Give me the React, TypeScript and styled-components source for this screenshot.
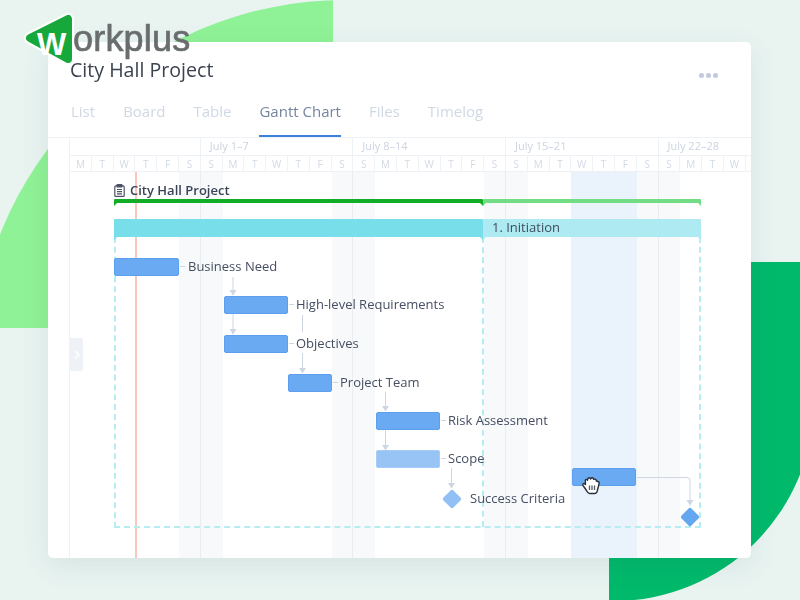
import { Fragment } from "react";
import styled, { createGlobalStyle } from "styled-components";

const ORIGIN_X = 70;
const ORIGIN_Y = 172;
const DAY = 21.8;

const TABS = ["List", "Board", "Table", "Gantt Chart", "Files", "Timelog"];
const WEEKS = [
  { label: "", days: 6 },
  { label: "July 1–7", days: 7 },
  { label: "July 8–14", days: 7 },
  { label: "July 15–21", days: 7 },
  { label: "July 22–28", days: 5 },
];
const LETTERS = ("MTWTFS" + "SMTWTFS".repeat(3) + "SMTW").split("");

const TASKS = [
  { name: "Business Need", x: 114, y: 258, w: 65, labelX: 188 },
  { name: "High-level Requirements", x: 224, y: 296, w: 64, labelX: 296 },
  { name: "Objectives", x: 224, y: 335, w: 64, labelX: 296 },
  { name: "Project Team", x: 288, y: 374, w: 44, labelX: 340 },
  { name: "Risk Assessment", x: 376, y: 412, w: 64, labelX: 448 },
  { name: "Scope", x: 376, y: 450, w: 64, labelX: 448, faded: true },
];

const GlobalStyle = createGlobalStyle`
  html, body {
    margin: 0;
    padding: 0;
  }
  body {
    font-family: "Open Sans", "Noto Sans", sans-serif;
  }
`;

const Page = styled.div`
  position: relative;
  width: 800px;
  height: 600px;
  box-sizing: border-box;
  padding: 42px 49px 42px 48px;
  overflow: hidden;
  background: #e9f4f1;
`;

const LightBlob = styled.div`
  position: absolute;
  left: 0;
  top: 0;
  width: 333px;
  height: 328px;
  background: #8ff296;
  clip-path: circle(371px at 345px 371px);
`;

const DarkBlob = styled.div`
  position: absolute;
  left: 609px;
  top: 262px;
  width: 205px;
  height: 339px;
  background: #00b96b;
  border-bottom-right-radius: 200px;
`;

const Card = styled.main`
  position: relative;
  display: flex;
  flex-direction: column;
  height: 100%;
  background: #fff;
  border-radius: 5px;
  overflow: hidden;
  box-shadow: 0 8px 28px rgba(50, 90, 90, 0.1);
  filter: blur(0.45px);
`;

const Header = styled.header`
  display: flex;
  justify-content: space-between;
  padding: 14px 33px 0 22px;
`;

const Title = styled.h1`
  margin: 0;
  font-size: 19.6px;
  line-height: 27px;
  font-weight: 400;
  color: #3c4350;
`;

const Dots = styled.div`
  display: flex;
  gap: 2px;
  margin-top: 17px;
`;

const Dot = styled.span`
  width: 5px;
  height: 5px;
  border-radius: 50%;
  background: #c2cadb;
`;

const Tabs = styled.nav`
  display: flex;
  gap: 28px;
  margin-top: 17px;
  padding-left: 23px;
`;

const Tab = styled.a<{ $active?: boolean }>`
  padding-bottom: 13px;
  font-size: 15px;
  line-height: 22px;
  color: ${(p) => (p.$active ? "#75859f" : "#d0d8e4")};
  border-bottom: 2px solid ${(p) => (p.$active ? "#3f80d8" : "transparent")};
`;

const Timeline = styled.section`
  flex: 1;
  display: flex;
  min-height: 0;
  border-top: 1px solid #eef1f5;
`;

const Rail = styled.div`
  width: 22px;
  flex-shrink: 0;
  border-right: 1px solid #eef1f5;
  box-sizing: border-box;
`;

const Schedule = styled.div`
  flex: 1;
  display: flex;
  flex-direction: column;
  min-width: 0;
  overflow: hidden;
`;

const WeekRow = styled.div`
  display: grid;
  grid-template-columns: repeat(32, ${DAY}px);
  height: 17px;
  flex-shrink: 0;
  border-bottom: 1px solid #eef1f5;
`;

const Week = styled.div<{ $days: number }>`
  grid-column: span ${(p) => p.$days};
  padding-left: 9px;
  font-size: 11px;
  line-height: 16px;
  color: #ccd4e0;
  border-right: 1px solid #eef1f5;
  box-sizing: border-box;
`;

const DayRow = styled.div`
  display: grid;
  grid-template-columns: repeat(32, ${DAY}px);
  height: 15px;
  flex-shrink: 0;
  border-bottom: 1px solid #eef1f5;
`;

const DayCell = styled.div`
  font-size: 10px;
  line-height: 16px;
  text-align: center;
  color: #d3dae4;
  border-right: 1px solid #f0f3f6;
  box-sizing: border-box;
`;

const Chart = styled.div`
  position: relative;
  flex: 1;
  display: grid;
  grid-template-columns: repeat(32, ${DAY}px);
`;

const Lane = styled.div<{ $tone: "plain" | "weekend" | "focus"; $weekEnd: boolean }>`
  box-sizing: border-box;
  background: ${(p) =>
    p.$tone === "focus" ? "#eaf2fc" : p.$tone === "weekend" ? "#f7f9fb" : "transparent"};
  border-right: ${(p) => (p.$weekEnd ? "1px solid #e9edf2" : "0")};
`;

const TodayLine = styled.div`
  position: absolute;
  left: ${135 - ORIGIN_X}px;
  top: 0;
  bottom: 0;
  width: 2px;
  background: #fbc6bb;
`;

const PhaseOutline = styled.div`
  position: absolute;
  left: ${114 - ORIGIN_X}px;
  top: ${237 - ORIGIN_Y}px;
  width: 587px;
  height: 291px;
  box-sizing: border-box;
  border: 2px dashed #b6edf3;
  border-top: 0;
`;

const PhaseDivider = styled.div`
  position: absolute;
  left: ${482 - ORIGIN_X}px;
  top: ${237 - ORIGIN_Y}px;
  height: 290px;
  border-left: 2px dashed #b6edf3;
`;

const Wires = styled.svg`
  position: absolute;
  inset: 0;
  width: 100%;
  height: 100%;
`;

const ProjectName = styled.div`
  position: absolute;
  left: ${114 - ORIGIN_X}px;
  top: ${181 - ORIGIN_Y}px;
  display: flex;
  align-items: center;
  gap: 5px;
  font-size: 13px;
  line-height: 18px;
  font-weight: 600;
  color: #3b4357;
`;

const SpanBar = styled.div<{ $top: number; $height: number }>`
  position: absolute;
  left: ${114 - ORIGIN_X}px;
  top: ${(p) => p.$top - ORIGIN_Y}px;
  width: 587px;
  height: ${(p) => p.$height}px;
  display: flex;
`;

const SpanPart = styled.div<{ $width: number; $color: string }>`
  position: relative;
  width: ${(p) => p.$width}px;
  box-sizing: border-box;
  padding-left: 9px;
  background: ${(p) => p.$color};
  border-radius: 1px 1px 0 0;
  color: #3e4c5c;
  font-size: 13px;
  line-height: 17px;
  &::before,
  &::after {
    content: "";
    position: absolute;
    top: 100%;
    width: 3px;
    height: 3px;
    background: ${(p) => p.$color};
  }
  &::before {
    left: 0;
    clip-path: polygon(0 0, 100% 0, 0 100%);
  }
  &::after {
    right: 0;
    clip-path: polygon(0 0, 100% 0, 100% 100%);
  }
`;

const TaskBar = styled.div<{ $x: number; $y: number; $w: number; $faded?: boolean }>`
  position: absolute;
  left: ${(p) => p.$x - ORIGIN_X}px;
  top: ${(p) => p.$y - ORIGIN_Y}px;
  width: ${(p) => p.$w}px;
  height: 18px;
  box-sizing: border-box;
  border-radius: 2px;
  background: ${(p) => (p.$faded ? "#97c3f5" : "#6aaaf2")};
  border: 1px solid ${(p) => (p.$faded ? "#a5cbf6" : "#5c9fee")};
`;

const TaskLabel = styled.span<{ $x: number; $y: number }>`
  position: absolute;
  left: ${(p) => p.$x - ORIGIN_X}px;
  top: ${(p) => p.$y - ORIGIN_Y - 9}px;
  font-size: 13px;
  line-height: 18px;
  white-space: nowrap;
  color: #464e62;
`;

const Milestone = styled.div<{ $x: number; $y: number; $color: string }>`
  position: absolute;
  left: ${(p) => p.$x - ORIGIN_X - 7}px;
  top: ${(p) => p.$y - ORIGIN_Y - 7}px;
  width: 14px;
  height: 14px;
  border-radius: 2px;
  background: ${(p) => p.$color};
  transform: rotate(45deg);
`;

const Cursor = styled.svg`
  position: absolute;
  left: ${581 - ORIGIN_X}px;
  top: ${476 - ORIGIN_Y}px;
  width: 20px;
  height: 19px;
`;

const SideToggle = styled.button`
  position: absolute;
  left: 22px;
  top: 296px;
  width: 13px;
  height: 33px;
  padding: 0;
  display: flex;
  align-items: center;
  justify-content: center;
  border: 0;
  border-radius: 0 2px 2px 0;
  background: #eef1f6;
`;

const Logo = styled.div`
  position: absolute;
  left: 22px;
  top: 10px;
  display: flex;
  align-items: flex-start;
`;

const LogoMark = styled.svg`
  width: 54px;
  height: 58px;
  flex-shrink: 0;
`;

const LogoWord = styled.span`
  margin: 8px 0 0 -3px;
  font-family: "Liberation Sans", Arial, sans-serif;
  font-size: 36px;
  line-height: 42px;
  letter-spacing: 0.2px;
  color: #6a6d6e;
  -webkit-text-stroke: 0.7px #6a6d6e;
  filter: blur(0.4px);
`;

const App = () => {
  return (
    <Page>
      <GlobalStyle />
      <LightBlob />
      <DarkBlob />
      <Card>
        <Header>
          <Title>City Hall Project</Title>
          <Dots>
            <Dot />
            <Dot />
            <Dot />
          </Dots>
        </Header>
        <Tabs>
          {TABS.map((t) => (
            <Tab key={t} $active={t === "Gantt Chart"}>
              {t}
            </Tab>
          ))}
        </Tabs>
        <Timeline>
          <Rail />
          <Schedule>
            <WeekRow>
              {WEEKS.map((w, i) => (
                <Week key={i} $days={w.days}>
                  {w.label}
                </Week>
              ))}
            </WeekRow>
            <DayRow>
              {LETTERS.map((d, i) => (
                <DayCell key={i}>{d}</DayCell>
              ))}
            </DayRow>
            <Chart>
              {LETTERS.map((_, i) => (
                <Lane
                  key={i}
                  $tone={i >= 23 && i <= 25 ? "focus" : i % 7 === 5 || i % 7 === 6 ? "weekend" : "plain"}
                  $weekEnd={i % 7 === 5}
                />
              ))}
              <TodayLine />
              <PhaseOutline />
              <PhaseDivider />

              <Wires viewBox={`${ORIGIN_X} ${ORIGIN_Y} 681 386`}>
                <g fill="none" stroke="#cdd6e2" strokeWidth="1">
                  <path d="M180 266.5H185M289 304.5H294M289 343.5H294M333 382.5H338M441 420.5H446M441 458.500H446" />
                  <path d="M233 277V295" />
                  <path d="M233 314V334" />
                  <path d="M302.500 315V332" />
                  <path d="M302.500 353V373" />
                  <path d="M385.500 392V411" />
                  <path d="M385.500 430V450" />
                  <path d="M451.500 468V488" />
                  <path d="M637 477.500H687a3 3 0 0 1 3 3V505" />
                </g>
                <g fill="#cdd6e2">
                  <path d="M229.500 290H236.500L233 295.500Z" />
                  <path d="M229.500 329H236.500L233 334.500Z" />
                  <path d="M299 368H306L302.500 373.500Z" />
                  <path d="M382 406H389L385.500 411.500Z" />
                  <path d="M382 445H389L385.500 450.500Z" />
                  <path d="M448 483H455L451.500 488.500Z" />
                  <path d="M686.500 500H693.500L690 505.500Z" />
                </g>
              </Wires>

              <ProjectName>
                <svg width="11" height="13" viewBox="0 0 11 13" fill="none" stroke="#4b5264" strokeWidth="1.2">
                  <rect x="0.8" y="1.8" width="9.4" height="10.6" rx="1" />
                  <rect x="3" y="0.6" width="5" height="2.4" rx="0.6" fill="#4b5264" />
                  <path d="M3 5.500H8M3 7.700H8M3 9.900H8" />
                </svg>
                City Hall Project
              </ProjectName>
              <SpanBar $top={199} $height={4}>
                <SpanPart $width={369} $color="#12ad26" />
                <SpanPart $width={218} $color="#72dd84" />
              </SpanBar>
              <SpanBar $top={219} $height={18}>
                <SpanPart $width={369} $color="#77deea" />
                <SpanPart $width={218} $color="#aeeaf2">
                  1. Initiation
                </SpanPart>
              </SpanBar>

              {TASKS.map((t) => (
                <Fragment key={t.name}>
                  <TaskBar $x={t.x} $y={t.y} $w={t.w} $faded={t.faded} />
                  <TaskLabel $x={t.labelX} $y={t.y + 8}>
                    {t.name}
                  </TaskLabel>
                </Fragment>
              ))}
              <Milestone $x={451.5} $y={499} $color="#92c0f5" />
              <TaskLabel $x={470} $y={498}>
                Success Criteria
              </TaskLabel>
              <TaskBar $x={572} $y={468} $w={64} />
              <Milestone $x={690} $y={517} $color="#63a7f1" />
              <Cursor viewBox="0 0 20 19">
                <path
                  d="M4.500 13 L2 9.500 C1 8 2.800 6.800 4 8 L4.500 8.500 L4.300 4.500 C4.300 3 6.300 3 6.500 4.300 L6.800 3 C7 1.300 9.200 1.300 9.500 3 L10 2.500 C10.600 1.200 12.500 1.600 12.500 3.200 L13.300 3.200 C14.500 2.800 15.500 3.800 15.300 5 L17 5.500 C18.200 5.800 18.300 7 18 8 L16.500 14 C16.200 16 15.500 17.500 14 17.500 L8.500 17.500 C6.800 17.500 5.800 15 4.500 13 Z"
                  fill="#fff"
                  stroke="#2a2f38"
                  strokeWidth="1.4"
                  strokeLinejoin="round"
                />
                <path d="M8.500 9.500V14M11 9.500V14M13.500 9.500V14" stroke="#555b66" strokeWidth="1.3" fill="none" />
              </Cursor>
            </Chart>
          </Schedule>
        </Timeline>
        <SideToggle aria-label="Expand">
          <svg width="6" height="10" viewBox="0 0 6 10" fill="none" stroke="#fff" strokeWidth="1.4">
            <path d="M1 1L5 5L1 9" />
          </svg>
        </SideToggle>
      </Card>
      <Logo>
        <LogoMark viewBox="22 10 54 58">
          <polygon points="30,38 68,19 68,59" fill="#fff" stroke="#fff" strokeWidth="12" strokeLinejoin="round" />
          <polygon points="30,38 68,19 68,59" fill="#17a83c" stroke="#17a83c" strokeWidth="8" strokeLinejoin="round" />
          <text x="37" y="55" fontFamily="Liberation Sans, Arial, sans-serif" fontSize="31" fontWeight="700" fill="#fff">
            W
          </text>
        </LogoMark>
        <LogoWord>orkplus</LogoWord>
      </Logo>
    </Page>
  );
};

export default App;
